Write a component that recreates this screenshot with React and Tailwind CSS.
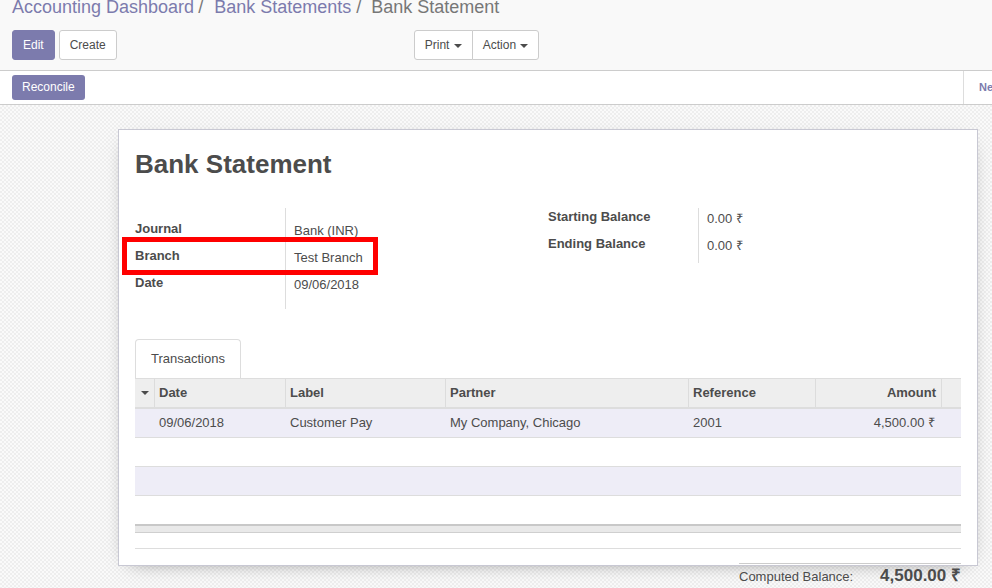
import React from 'react';

const ROWS = [
    { date: '09/06/2018', label: 'Customer Pay', partner: 'My Company, Chicago', ref: '2001', amount: '4,500.00 ₹' },
    null,
    null,
    null,
];

function Caret() {
    return (
        <span className="ml-px inline-block h-0 w-0 align-middle border-t-[4px] border-x-[4px] border-x-transparent border-t-[#4c4c4c]" />
    );
}

function FieldGroup({ fields, padTop, padBottom }) {
    return (
        <div className="flex">
            <div className={`w-[151px] border-r border-[#dddddd] ${padTop} ${padBottom}`}>
                {fields.map((f) => (
                    <div key={f.label} className="h-[27px] pt-[1px] leading-[15px] font-bold">
                        {f.label}
                    </div>
                ))}
            </div>
            <div className={`pl-[8px] ${padTop}`}>
                {fields.map((f) => (
                    <div key={f.label} className="h-[27px] pt-[3px] leading-[15px]">
                        {f.value}
                    </div>
                ))}
            </div>
        </div>
    );
}

export default function App() {
    return (
        <div className="w-[992px] h-[588px] overflow-hidden bg-white font-['Liberation_Sans',Arial,sans-serif] text-[13px] text-[#4c4c4c]">
            {/* Control panel */}
            <div className="h-[71px] flex flex-col bg-[#f9f9f9] border-b border-[#cccccc] px-3">
                <div className="-mt-[3px] h-[20px] text-[18px] leading-[20px] whitespace-nowrap">
                    <span className="text-[#7c7bad]">Accounting Dashboard</span>
                    <span className="ml-[4px] mr-[11px] text-[#777777]">/</span>
                    <span className="text-[#7c7bad]">Bank Statements</span>
                    <span className="ml-[5px] mr-[10px] text-[#777777]">/</span>
                    <span className="text-[#777777]">Bank Statement</span>
                </div>
                <div className="mt-[13px] flex items-center text-[12px]">
                    <div className="flex gap-[4px]">
                        <button className="h-[30px] px-[10px] leading-[18px] rounded-[3px] border border-[#7c7bad] bg-[#7c7bad] text-white">
                            Edit
                        </button>
                        <button className="h-[30px] px-[10px] leading-[18px] rounded-[3px] border border-[#cccccc] bg-white text-[#4c4c4c]">
                            Create
                        </button>
                    </div>
                    <div className="ml-[297px] flex">
                        <button className="h-[30px] px-[10px] leading-[18px] rounded-l-[3px] border border-[#cccccc] bg-white text-[#4c4c4c]">
                            Print <Caret />
                        </button>
                        <button className="-ml-px h-[30px] px-[10px] leading-[18px] rounded-r-[3px] border border-[#cccccc] bg-white text-[#4c4c4c]">
                            Action <Caret />
                        </button>
                    </div>
                </div>
            </div>

            {/* Status bar */}
            <div className="h-[34px] flex border-b border-[#cccccc] bg-white">
                <div className="pl-3 pt-[4px]">
                    <button className="h-[25px] px-[10px] rounded-[3px] bg-[#7c7bad] text-white text-[12px] leading-[25px]">
                        Reconcile
                    </button>
                </div>
                <div className="ml-auto w-[29px] shrink-0 overflow-hidden border-l border-[#dddddd] pl-[15px] flex items-center whitespace-nowrap text-[11px] font-bold text-[#7c7bad]">
                    New
                </div>
            </div>

            {/* Sheet background */}
            <div className="h-[483px] pt-[24px] pl-[118px] bg-[image:repeating-conic-gradient(#eeeeee_0_25%,#fafafa_0_50%)] bg-[length:4px_4px]">
                <div className="relative w-[860px] h-[437px] bg-white border border-[#c8c8d3] shadow-[0_5px_20px_-12px_rgba(0,0,0,0.6)] px-[16px] pt-[19px]">
                    <h1 className="text-[26px] leading-[30px] font-bold text-[#4c4c4c]">Bank Statement</h1>

                    {/* Fields */}
                    <div className="mt-[29px] grid grid-cols-2 items-start">
                        <FieldGroup
                            padTop="pt-[12px]"
                            padBottom="pb-[8px]"
                            fields={[
                                { label: 'Journal', value: 'Bank (INR)' },
                                { label: 'Branch', value: 'Test Branch' },
                                { label: 'Date', value: '09/06/2018' },
                            ]}
                        />
                        <FieldGroup
                            padTop="pt-0"
                            padBottom="pb-px"
                            fields={[
                                { label: 'Starting Balance', value: '0.00 ₹' },
                                { label: 'Ending Balance', value: '0.00 ₹' },
                            ]}
                        />
                    </div>

                    {/* Highlight box */}
                    <div className="absolute left-[3px] top-[107px] w-[256px] h-[38px] border-[5px] border-[#ff0000]" />

                    {/* Tabs */}
                    <div className="mt-[30px] flex">
                        <div className="h-[39px] px-[15px] border-x border-t border-[#dddddd] rounded-t-[4px] leading-[38px]">
                            Transactions
                        </div>
                    </div>

                    {/* Lines table */}
                    <div className="grid grid-cols-[19px_131px_160px_243px_127px_126px_20px] bg-[#eeeeee] border-t border-[#dddddd] border-b-2 border-b-[#dddddd] font-bold leading-[28px]">
                        <div className="h-[28px] flex items-center justify-center">
                            <span className="inline-block h-0 w-0 border-t-[4px] border-x-[4px] border-x-transparent border-t-[#4c4c4c]" />
                        </div>
                        <div className="h-[28px] border-l border-[#dcdcdc] pl-[4px]">Date</div>
                        <div className="h-[28px] border-l border-[#dcdcdc] pl-[4px]">Label</div>
                        <div className="h-[28px] border-l border-[#dcdcdc] pl-[4px]">Partner</div>
                        <div className="h-[28px] border-l border-[#dcdcdc] pl-[4px]">Reference</div>
                        <div className="h-[28px] border-l border-[#dcdcdc] pr-[5px] text-right">Amount</div>
                        <div className="h-[28px] border-l border-[#dcdcdc]" />
                    </div>
                    {ROWS.map((row, i) => (
                        <div
                            key={i}
                            className={`grid grid-cols-[19px_131px_160px_243px_127px_126px_20px] h-[28px] leading-[28px] ${i % 2 === 0 ? 'bg-[#eeedf7]' : 'bg-white'} ${i < 3 ? 'h-[29px] border-b border-[#dddddd]' : ''}`}
                        >
                            <div />
                            <div className="pl-[5px]">{row?.date}</div>
                            <div className="pl-[5px]">{row?.label}</div>
                            <div className="pl-[5px]">{row?.partner}</div>
                            <div className="pl-[5px]">{row?.ref}</div>
                            <div className="pr-[6px] text-right">{row?.amount}</div>
                            <div />
                        </div>
                    ))}
                    <div className="h-[9px] bg-[#e9e9e9] border-t-2 border-[#c8c8c8] border-b border-b-[#cfcfcf]" />
                    <div className="h-[16px] border-b border-[#dddddd]" />

                    {/* Totals */}
                    <div className="mt-[14px] ml-auto w-[222px] border-t border-[#cccccc] flex items-baseline justify-between">
                        <span>Computed Balance:</span>
                        <span className="text-[17px] leading-[24px] font-bold">4,500.00 ₹</span>
                    </div>
                </div>
            </div>
        </div>
    );
}
